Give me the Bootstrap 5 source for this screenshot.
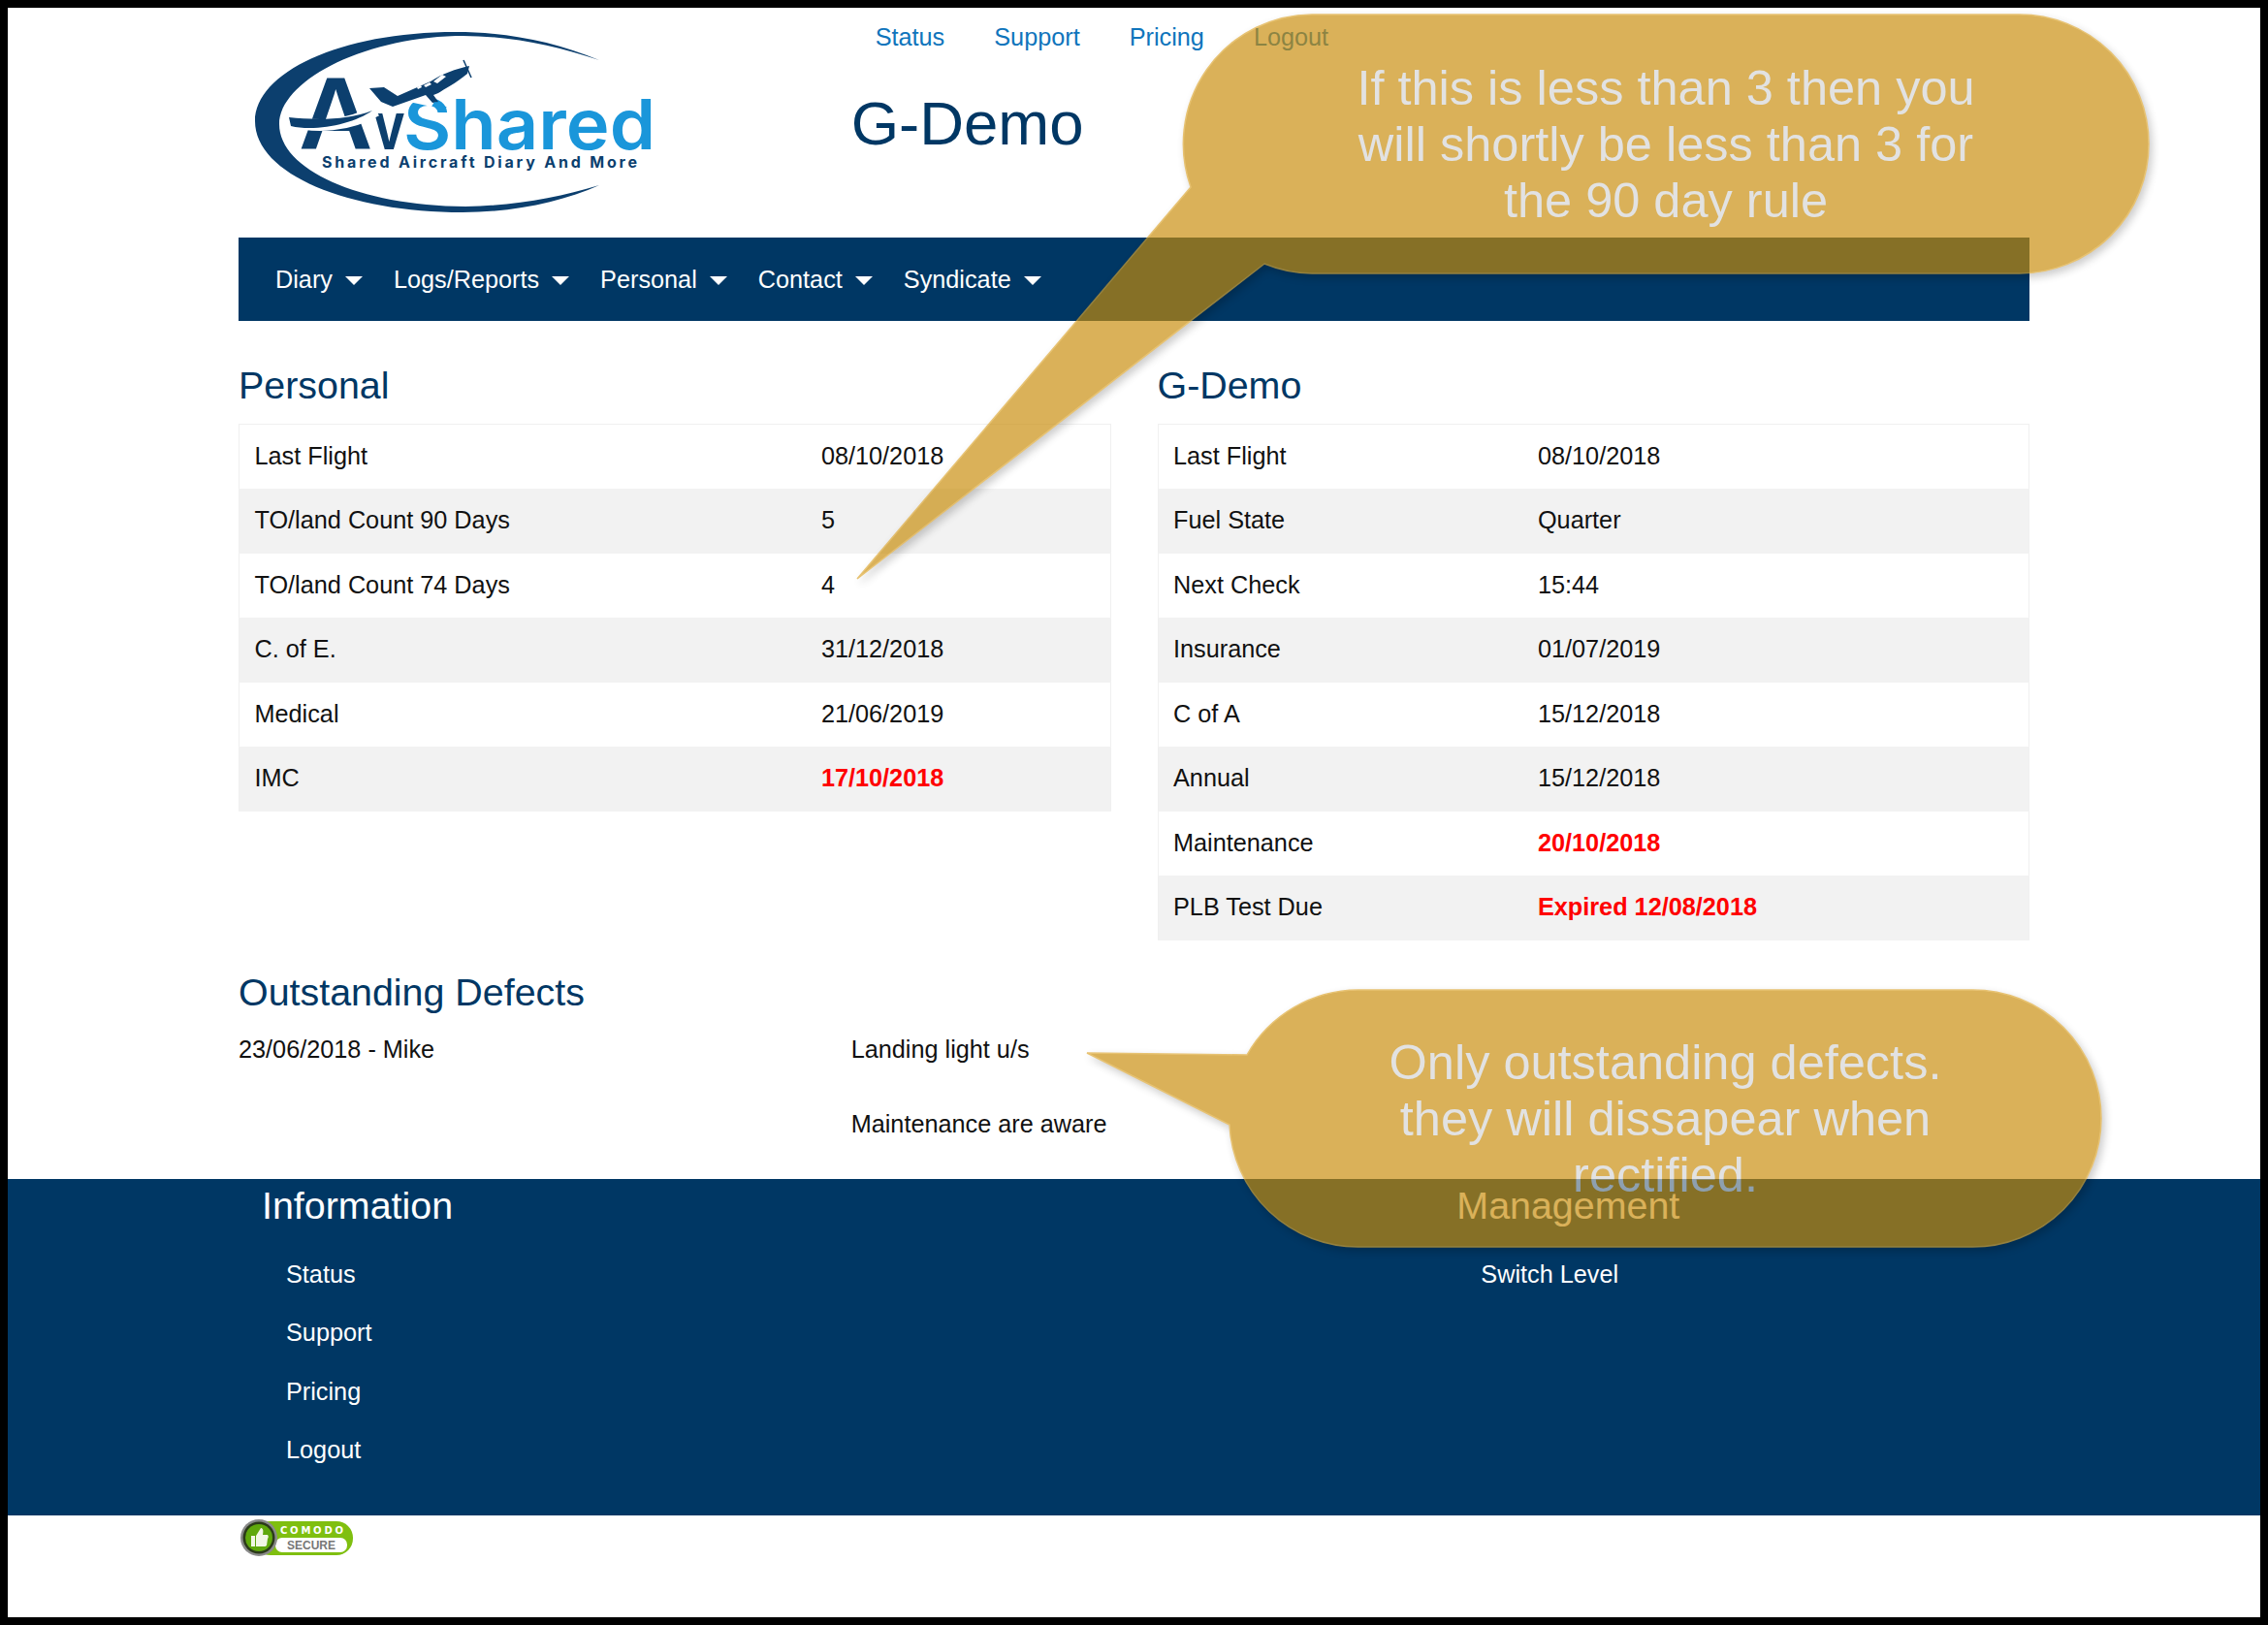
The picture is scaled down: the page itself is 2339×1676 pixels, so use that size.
<!DOCTYPE html>
<html lang="en">
<head>
  <meta charset="UTF-8"/>
  <title>AvShared</title>
  <meta name="viewport" content="width=device-width, initial-scale=1"/>
  <link href="https://cdn.jsdelivr.net/npm/bootstrap@5.3.0/dist/css/bootstrap.min.css" rel="stylesheet"/>
  <style>
    html{font-size:16px;}
    body{border:8px solid #000;min-height:1676px;background:#fff;color:#111;font-family:"Liberation Sans",Arial,sans-serif;font-size:25.25px;line-height:37.5px;}
    .page-box{width:1847px;margin:0 auto;}
    .page-box .row{--bs-gutter-x:48px;}
    .page-head{height:237px;}
    .logo-svg{display:block;margin-top:17px;}
    .top-links{margin-top:12px;}
    .top-links .nav-link{padding:0 25.5px;color:#0f75bc;}
    .top-links .nav-item:first-child .nav-link{padding-left:25px;}
    .site-title{font-size:63.5px;line-height:76px;color:#003764;margin:31.5px 0 0;font-weight:400;}
    .main-nav{background:#003764;padding:25.25px 22px 23.25px;}
    .main-nav .nav-link{color:#fff!important;padding:0 16px!important;}
    .main-nav .dropdown-toggle::after{border-top-width:9px;border-right-width:9px;border-left-width:9px;margin-left:13px;vertical-align:3px;}
    .block-title{font-size:39.4px;line-height:48px;color:#003764;font-weight:400;margin:0 0 16px;}
    .tables-row{padding-top:41.5px;}
    .tables-row .block-title{margin-bottom:16.5px;}
    .stat-table{border:1px solid #f0f0f0;margin:0;table-layout:fixed;color:#111;}
    .stat-table td{padding:13.5px 16px 14.5px 15.5px;border-bottom:1px solid #f2f2f2;background:#fff;}
    .stat-table tr:nth-child(even) td{background:#f2f2f2;}
    .val-bad{color:#f00;font-weight:700;}
    .defects{margin-top:29px;height:216.5px;}
    .defects .block-title{margin-bottom:16.5px;}
    .defects p{margin:0 0 39.5px;}
    .site-foot{background:#003764;color:#fff;padding:3.5px 0 37px;}
    .site-foot .block-title{color:#fff;margin-bottom:17px;}
    .site-foot .nav-link{color:#fff;padding:11.5px 25px;}
    .page-box .foot-row{--bs-gutter-x:0;margin:0;}
    .foot-right{padding-left:25px;}
    .badge-svg{display:block;margin-top:3px;margin-left:2px;}
    .callouts{position:absolute;left:0;top:0;width:2339px;height:1676px;opacity:.67;pointer-events:none;}
    .callouts svg{position:absolute;left:0;top:0;}
    .callout-text{position:absolute;color:#d4d4d4;font-size:50.5px;line-height:58px;text-align:center;}
    .callout-one{left:1220px;top:15px;width:996px;height:267px;padding:0 165px;}
    .callout-two{left:1268px;top:1021px;width:899px;height:265px;padding:0 120px;}
  </style>
</head>
<body>
<div class="page-box">
  <div class="row page-head">
    <div class="col-4">
      <svg class="logo-svg" width="430" height="200" viewBox="246 25 430 200">
        <path fill="#0c3f6e" d="M618,62 C570,42 520,33 470,33 C350,33 263,75 263,125 C263,180 360,219 477,219 C530,219 580,208 618,191 C575,204 530,212 480,213 C370,212 288,175 288,128 C288,85 370,40 470,37 C520,36 570,46 618,62Z"/>
        <text x="308" y="154" font-family="Liberation Sans" font-weight="700" font-size="106" fill="#0c3f6e">A</text>
        <text x="386" y="154" font-family="Liberation Sans" font-weight="700" font-size="70" fill="#0c3f6e" textLength="31" lengthAdjust="spacingAndGlyphs">v</text>
        <text x="416" y="154" font-family="Inter" font-weight="600" font-size="72" fill="#1a96da" textLength="260" lengthAdjust="spacingAndGlyphs">Shared</text>
        <path fill="none" stroke="#fff" stroke-width="12" d="M298,124 C325,133 360,130 388,114"/>
        <path fill="#0c3f6e" d="M298,121 C325,124 360,124 384,114 C365,128 325,136 300,130Z"/>
        <path fill="#fff" d="M408,102 L445,110 L452,98 L430,95Z"/>
        <path fill="#0c3f6e" d="M381,91 L396,90 L410,99 L444,84 C456,76 470,71 484,68 L482,76 C470,86 458,92 452,96 L447,98 L452,105 L446,106 L439,98 L405,110 L393,105Z"/>
        <path stroke="#0c3f6e" stroke-width="1.5" d="M478,62 L486,80"/>
        <path fill="#fff" d="M447,84 L456,77 L460,79 L451,86Z M437,88 L443,85 L445,87 L439,90Z M430,90 L434,88 L435,90 L431,92Z"/>
        <path fill="#1a96da" d="M448,105 L455,107 L461,111 L452,113Z"/>
        <text x="332" y="173" font-family="Inter" font-weight="700" font-size="16" fill="#0c3f6e" textLength="325" lengthAdjust="spacing">Shared Aircraft Diary And More</text>
      </svg>
    </div>
    <div class="col-8">
      <ul class="nav top-links">
        <li class="nav-item"><a class="nav-link" href="#">Status</a></li>
        <li class="nav-item"><a class="nav-link" href="#">Support</a></li>
        <li class="nav-item"><a class="nav-link" href="#">Pricing</a></li>
        <li class="nav-item"><a class="nav-link" href="#">Logout</a></li>
      </ul>
      <h1 class="site-title">G-Demo</h1>
    </div>
  </div>

  <nav class="navbar navbar-expand navbar-dark main-nav">
    <ul class="navbar-nav">
      <li class="nav-item"><a class="nav-link dropdown-toggle" href="#">Diary</a></li>
      <li class="nav-item"><a class="nav-link dropdown-toggle" href="#">Logs/Reports</a></li>
      <li class="nav-item"><a class="nav-link dropdown-toggle" href="#">Personal</a></li>
      <li class="nav-item"><a class="nav-link dropdown-toggle" href="#">Contact</a></li>
      <li class="nav-item"><a class="nav-link dropdown-toggle" href="#">Syndicate</a></li>
    </ul>
  </nav>

  <div class="row tables-row">
    <div class="col-6">
      <h3 class="block-title">Personal</h3>
      <table class="table stat-table">
        <colgroup><col style="width:65.1%"/><col/></colgroup>
        <tbody>
          <tr><td>Last Flight</td><td>08/10/2018</td></tr>
          <tr><td>TO/land Count 90 Days</td><td>5</td></tr>
          <tr><td>TO/land Count 74 Days</td><td>4</td></tr>
          <tr><td>C. of E.</td><td>31/12/2018</td></tr>
          <tr><td>Medical</td><td>21/06/2019</td></tr>
          <tr><td>IMC</td><td class="val-bad">17/10/2018</td></tr>
        </tbody>
      </table>
    </div>
    <div class="col-6">
      <h3 class="block-title">G-Demo</h3>
      <table class="table stat-table">
        <colgroup><col style="width:41.9%"/><col/></colgroup>
        <tbody>
          <tr><td>Last Flight</td><td>08/10/2018</td></tr>
          <tr><td>Fuel State</td><td>Quarter</td></tr>
          <tr><td>Next Check</td><td>15:44</td></tr>
          <tr><td>Insurance</td><td>01/07/2019</td></tr>
          <tr><td>C of A</td><td>15/12/2018</td></tr>
          <tr><td>Annual</td><td>15/12/2018</td></tr>
          <tr><td>Maintenance</td><td class="val-bad">20/10/2018</td></tr>
          <tr><td>PLB Test Due</td><td class="val-bad">Expired 12/08/2018</td></tr>
        </tbody>
      </table>
    </div>
  </div>

  <div class="defects">
    <h3 class="block-title">Outstanding Defects</h3>
    <div class="row">
      <div class="col-4">23/06/2018 - Mike</div>
      <div class="col-8">
        <p>Landing light u/s</p>
        <p>Maintenance are aware</p>
      </div>
    </div>
  </div>
</div>

<footer class="site-foot">
  <div class="page-box">
    <div class="row foot-row">
      <div class="col-8 ps-4">
        <h3 class="block-title">Information</h3>
        <ul class="nav flex-column">
          <li class="nav-item"><a class="nav-link" href="#">Status</a></li>
          <li class="nav-item"><a class="nav-link" href="#">Support</a></li>
          <li class="nav-item"><a class="nav-link" href="#">Pricing</a></li>
          <li class="nav-item"><a class="nav-link" href="#">Logout</a></li>
        </ul>
      </div>
      <div class="col-4 foot-right">
        <h3 class="block-title">Management</h3>
        <ul class="nav flex-column">
          <li class="nav-item"><a class="nav-link" href="#">Switch Level</a></li>
        </ul>
      </div>
    </div>
  </div>
</footer>

<div class="page-box">
  <svg class="badge-svg" width="118" height="42" viewBox="0 0 118 42">
    <rect x="14" y="3" width="102" height="35" rx="17" fill="#7fbf10"/>
    <rect x="36" y="20" width="74" height="15" rx="7" fill="#fff"/>
    <text x="41" y="16" font-family="DejaVu Sans" font-weight="700" font-size="10" fill="#fff" textLength="65">COMODO</text>
    <text x="48" y="32" font-family="Liberation Sans" font-weight="700" font-size="13" fill="#777" textLength="50" lengthAdjust="spacingAndGlyphs">SECURE</text>
    <circle cx="19" cy="20" r="19" fill="#8a8a8a"/>
    <circle cx="19" cy="20" r="16.5" fill="#2b3a1a"/>
    <circle cx="19" cy="20" r="14" fill="#5fa80c"/>
    <path fill="#f2f7e6" d="M11,18 H15 V29 H11Z M16,18 L21,10 C23,10 24,12 23,17 H28 C29,18 29,20 28,21 L27,28 C26,29 25,29 24,29 H16Z"/>
  </svg>
</div>

<!-- the two yellow remarks laid over the page -->
<div class="callouts">
  <svg width="2339" height="1676" viewBox="0 0 2339 1676">
    <g fill="#c88c08" stroke="#dca52e" stroke-width="1.5" style="filter:drop-shadow(3px 4px 4px rgba(0,0,0,.3))">
      <path d="M1353,15 H2082.5 A133.5,133.5 0 0 1 2082.5,282 H1353 A133.5,133.5 0 0 1 1304,272 L884,597 L1228,193 A133.5,133.5 0 0 1 1353,15Z"/>
      <path d="M1400.5,1021 H2034.5 A132.5,132.5 0 0 1 2034.5,1286 H1400.5 A132.5,132.5 0 0 1 1268,1160 L1121,1086 L1286,1088 A132.5,132.5 0 0 1 1400.5,1021Z"/>
    </g>
  </svg>
  <div class="callout-text callout-one d-flex align-items-center justify-content-center">If this is less than 3 then you will shortly be less than 3 for the 90 day rule</div>
  <div class="callout-text callout-two d-flex align-items-center justify-content-center">Only outstanding defects. they will dissapear when rectified.</div>
</div>

<script src="https://cdn.jsdelivr.net/npm/bootstrap@5.3.0/dist/js/bootstrap.bundle.min.js"></script>
</body>
</html>
